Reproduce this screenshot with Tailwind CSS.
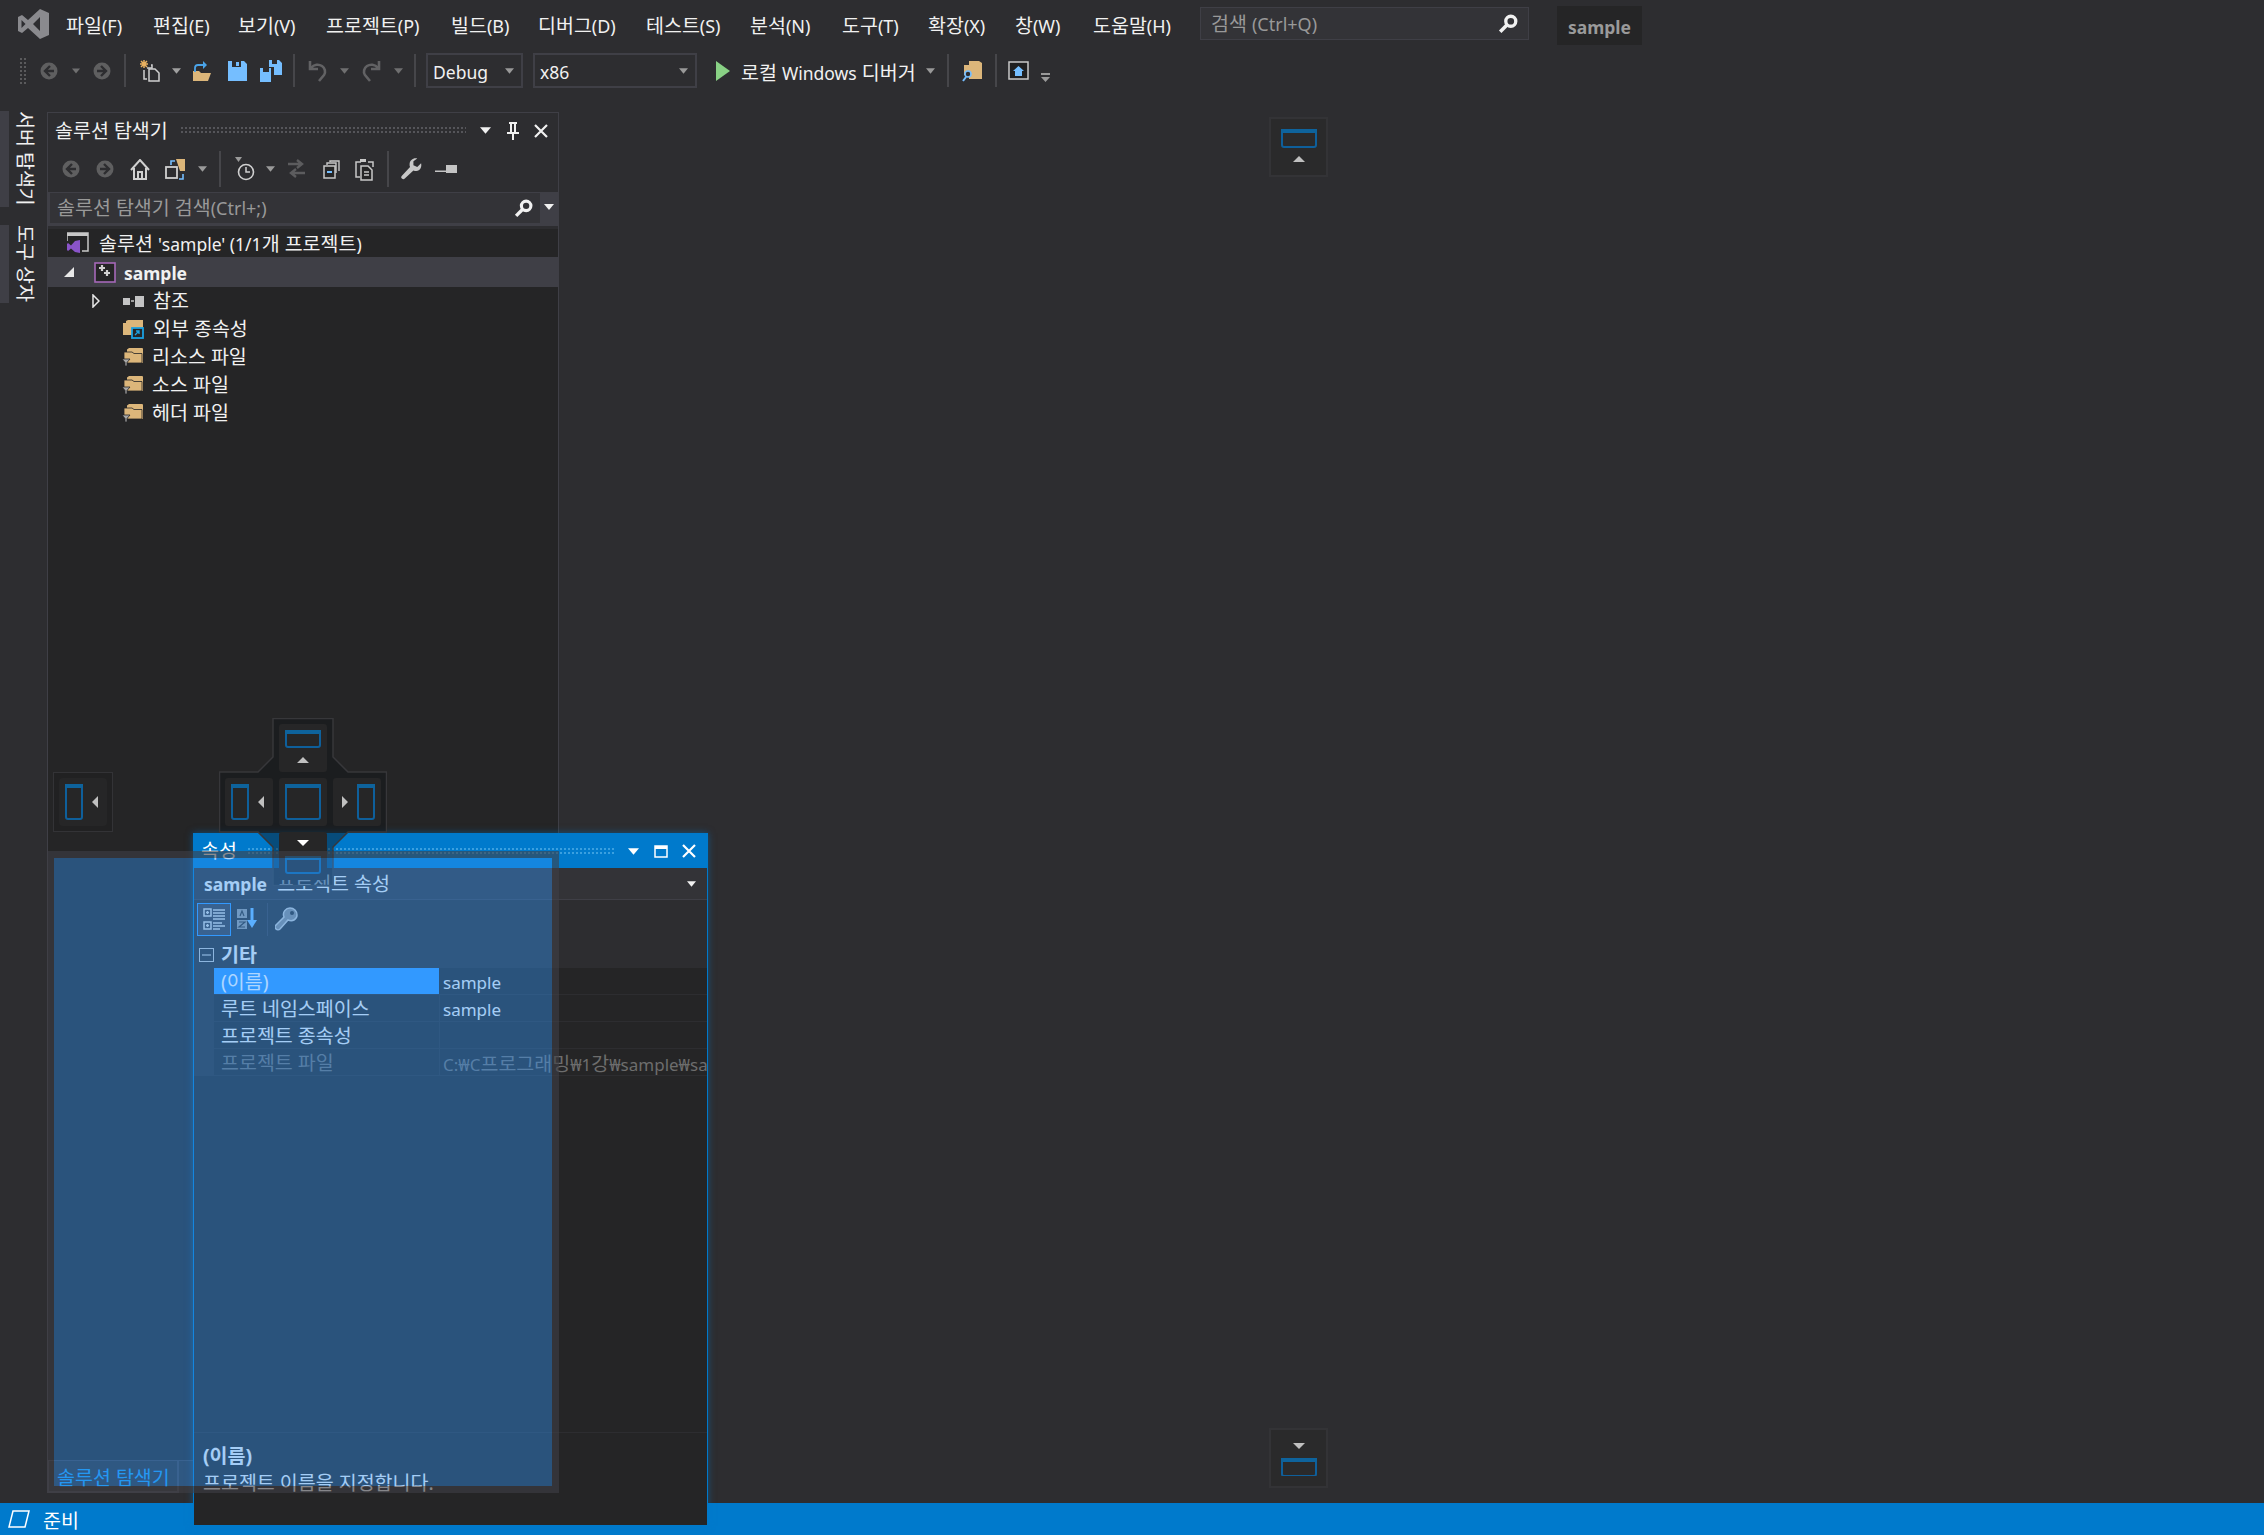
<!doctype html>
<html lang="ko">
<head>
<meta charset="utf-8">
<script src="https://cdn.jsdelivr.net/npm/@tailwindcss/browser@4"></script>
</head>
<body class="bg-[#2d2d30]">
<svg class="hidden">
<defs>
<symbol id="down" viewBox="0 0 10 6"><path d="M0 0h10L5 6z" fill="currentColor"/></symbol>
<symbol id="nav" viewBox="0 0 18 18"><circle cx="9" cy="9" r="8.5" fill="#5f5f60"/><path d="M10 4 5 9l5 5M5 9h9" stroke="#2d2d30" stroke-width="2.4" fill="none"/></symbol>
<symbol id="navr" viewBox="0 0 18 18"><circle cx="9" cy="9" r="8.5" fill="#5f5f60"/><path d="M8 4l5 5-5 5M13 9H4" stroke="#2d2d30" stroke-width="2.4" fill="none"/></symbol>
<symbol id="mag" viewBox="0 0 18 18"><circle cx="11.5" cy="6.5" r="4.5" fill="none" stroke="#f1f1f1" stroke-width="3"/><path d="M8 10 2 16" stroke="#f1f1f1" stroke-width="3.2"/></symbol>
<symbol id="wrench" viewBox="0 0 24 24"><path d="M22 6l-4 4-4-2V4l4-3c-4-1-8 2-8 6 0 1 0 2 .5 3L2 19c-1 1-1 2 0 3s2 1 3 0l9-8.500c1 .5 2 .5 3 .5 4 0 6-4 5-8z" fill="currentColor"/></symbol>
<symbol id="filter" viewBox="0 0 22 20"><path d="M5 5V2.500L7 1h13a1 1 0 0 1 1 1v14H5z" fill="#dcb67a"/><path d="M2 5h8l2 1.500h8V16H5v-3H2z" fill="#dcb67a" stroke="#252526" stroke-width=".8"/><path d="M0 12h8L5 15.500V19H3v-3.500z" fill="#a8a8a8" stroke="#252526" stroke-width=".8"/></symbol>
</defs>
</svg>
<div class="relative w-[2264px] h-[1535px] overflow-hidden flex flex-col text-[#f1f1f1] text-[19.500px] font-['Noto_Sans','Noto_Sans_CJK_KR',sans-serif]">

  <!-- menu bar -->
  <div class="h-[50px] flex items-start shrink-0">
    <div class="w-[66px] pl-[18px] pt-[9px] shrink-0">
      <svg width="31" height="30" viewBox="0 0 31 30"><path d="M22 0 31 4v22l-9 4-12-11-6 5-4-2V8l4-2 6 5zM22 8l-7 7 7 7zM3.500 11v8l4-4z" fill="#8a8a8e" fill-rule="evenodd"/></svg>
    </div>
    <div class="flex items-center h-[50px] pt-[1px] shrink-0 leading-none whitespace-nowrap [&>span>i]:not-italic [&>span>i]:text-[18px]">
      <span class="w-[87px]">파일<i>(F)</i></span>
      <span class="w-[85px]">편집<i>(E)</i></span>
      <span class="w-[88px]">보기<i>(V)</i></span>
      <span class="w-[125px]">프로젝트<i>(P)</i></span>
      <span class="w-[87px]">빌드<i>(B)</i></span>
      <span class="w-[108px]">디버그<i>(D)</i></span>
      <span class="w-[104px]">테스트<i>(S)</i></span>
      <span class="w-[92px]">분석<i>(N)</i></span>
      <span class="w-[86px]">도구<i>(T)</i></span>
      <span class="w-[87px]">확장<i>(X)</i></span>
      <span class="w-[78px]">창<i>(W)</i></span>
      <span class="w-[107px]">도움말<i>(H)</i></span>
    </div>
    <div class="mt-[7px] w-[329px] h-[33px] bg-[#333337] border border-[#3f3f46] flex items-center pl-[10px] pr-[10px] justify-between text-[#999999] shrink-0">
      <span class="whitespace-nowrap">검색 <span class="text-[18px]">(Ctrl+Q)</span></span>
      <svg width="20" height="20"><use href="#mag"/></svg>
    </div>
    <div class="ml-[28px] mt-[6px] pt-[3px] w-[85px] h-[39px] bg-[#252526] flex items-center justify-center font-bold text-[17.500px] text-[#9a9a9a] shrink-0">sample</div>
  </div>

  <!-- toolbar -->
  <div class="h-[41px] flex items-center pl-[19px] shrink-0 text-[#6f6f70]">
    <div class="w-[8px] h-[28px] bg-[radial-gradient(#5a5a5c_1px,transparent_1px)] bg-[length:4px_4px]"></div>
    <svg class="ml-[13px]" width="18" height="18"><use href="#nav"/></svg>
    <svg class="ml-[14px]" width="8" height="6"><use href="#down"/></svg>
    <svg class="ml-[13px]" width="18" height="18"><use href="#navr"/></svg>
    <div class="ml-[13px] w-[2px] h-[33px] bg-[#46464a]"></div>
    <svg class="ml-[13px]" width="21" height="22" viewBox="0 0 21 22"><path d="M10 9h6l4 4v8H10z" fill="#2d2d30" stroke="#d0d0d0" stroke-width="1.500"/><path d="M8 8h5V5h-1M5 10v9h3" fill="none" stroke="#d0d0d0" stroke-width="1.500"/><path d="M5 0v8M1 4h8M2 1l6 6M8 1 2 7" stroke="#e8b060" stroke-width="1.500"/></svg>
    <svg class="ml-[12px] text-[#a0a0a0]" width="9" height="6"><use href="#down"/></svg>
    <svg class="ml-[11px]" width="21" height="22" viewBox="0 0 21 22"><path d="M1 21V11h6l2 2h10l-3 8z" fill="#dcb67a"/><path d="M3 12V8c0-2 1-3 3-3h6" fill="none" stroke="#4aa3e8" stroke-width="1.800"/><path d="M11 1l4 4-4 4z" fill="#4aa3e8"/></svg>
    <svg class="ml-[15px]" width="19" height="20" viewBox="0 0 19 20"><path d="M0 0h4v6h9V0h3l3 3v17H0z" fill="#75beff"/><rect x="8" y="1" width="3" height="4" fill="#75beff"/></svg>
    <svg class="ml-[13px]" width="22" height="22" viewBox="0 0 22 22"><path d="M0 8h3v4h6V8h2v14H0z" fill="#75beff"/><path d="M9 0h3v4h5V0h2l3 3v12h-8V7H9z" fill="#75beff"/></svg>
    <div class="ml-[11px] w-[2px] h-[33px] bg-[#46464a]"></div>
    <svg class="ml-[13px]" width="19" height="22" viewBox="0 0 19 22"><path d="M2 1v8h8M3 8c3-4 8-4 11-2s4 6 2 9l-5 6" fill="none" stroke="#626264" stroke-width="2.600"/></svg>
    <svg class="ml-[13px]" width="9" height="6"><use href="#down"/></svg>
    <svg class="ml-[13px]" width="19" height="22" viewBox="0 0 19 22"><path d="M17 1v8H9M16 8c-3-4-8-4-11-2s-4 6-2 9l5 6" fill="none" stroke="#626264" stroke-width="2.600"/></svg>
    <svg class="ml-[13px]" width="9" height="6"><use href="#down"/></svg>
    <div class="ml-[11px] w-[2px] h-[33px] bg-[#46464a]"></div>
    <div class="ml-[10px] w-[97px] h-[35px] border-2 border-[#3f3f46] flex items-center justify-between pl-[5px] pr-[7px] text-[#f1f1f1] text-[17.500px]">
      <span class="pt-[4px]">Debug</span><svg class="text-[#999]" width="9" height="6"><use href="#down"/></svg>
    </div>
    <div class="ml-[10px] w-[164px] h-[35px] border-2 border-[#3f3f46] flex items-center justify-between pl-[5px] pr-[7px] text-[#f1f1f1] text-[17.500px]">
      <span class="pt-[4px]">x86</span><svg class="text-[#999]" width="9" height="6"><use href="#down"/></svg>
    </div>
    <svg class="ml-[19px]" width="14" height="20" viewBox="0 0 14 20"><path d="M0 0 14 10 0 20z" fill="#89d185"/></svg>
    <span class="ml-[11px] w-[175px] pt-[4px] text-[#f1f1f1] whitespace-nowrap">로컬 <span class="text-[17.500px]">Windows</span> 디버거</span>
    <svg class="ml-[10px] text-[#999]" width="9" height="6"><use href="#down"/></svg>
    <div class="ml-[12px] w-[2px] h-[33px] bg-[#46464a]"></div>
    <svg class="ml-[13px]" width="20" height="22" viewBox="0 0 20 22"><path d="M7 3V1h10l3 2v16H7z" fill="#dcb67a"/><path d="M2 5h9v10H2z" fill="#dcb67a"/><circle cx="6" cy="14" r="3" fill="#2d2d30" stroke="#75beff" stroke-width="1.600"/><path d="M4 17l-3 4" stroke="#75beff" stroke-width="2"/></svg>
    <div class="ml-[13px] w-[2px] h-[33px] bg-[#46464a]"></div>
    <svg class="ml-[11px]" width="21" height="19" viewBox="0 0 21 19"><rect x="1" y="1" width="19" height="17" fill="#1f1f20" stroke="#c8c8c8" stroke-width="1.500"/><path d="M10.500 5 5 10h2v5h7v-5h2z" fill="#75beff"/></svg>
    <svg class="ml-[12px] mt-[14px] text-[#999]" width="9" height="9" viewBox="0 0 9 9"><path d="M0 0h9v2H0zM0 4h9L4.500 9z" fill="currentColor"/></svg>
  </div>

  <!-- main -->
  <div class="flex-1 flex min-h-0">
    <div class="w-[47px] shrink-0 pt-[20px] flex flex-col gap-[18px]">
      <div class="flex h-[96px]"><div class="w-[9px] bg-[#3f3f46]"></div><span class="pl-[6px] [writing-mode:vertical-rl] [text-orientation:sideways] whitespace-nowrap leading-[20px]">서버 탐색기</span></div>
      <div class="flex h-[78px]"><div class="w-[9px] bg-[#3f3f46]"></div><span class="pl-[6px] [writing-mode:vertical-rl] [text-orientation:sideways] whitespace-nowrap leading-[20px]">도구 상자</span></div>
    </div>
    <div class="mt-[21px] mb-[10px] w-[512px] flex flex-col shrink-0">
      <div class="flex-1 flex flex-col border border-[#3f3f46] min-h-0">
        <div class="h-[35px] flex items-center pl-[7px] pr-[10px] shrink-0">
          <span class="w-[125px] shrink-0 whitespace-nowrap">솔루션 탐색기</span>
          <div class="w-[286px] h-[9px] bg-[radial-gradient(#55555a_1px,transparent_1px)] bg-[length:4px_4px]"></div>
          <svg class="ml-[14px]" width="11" height="7"><use href="#down"/></svg>
          <svg class="ml-[16px]" width="12" height="20" viewBox="0 0 12 20"><path d="M2 1h8v2H9v8h3v2H7v6H5v-6H0v-2h3V3H2z" fill="#f1f1f1"/><path d="M5 3h2v8H5z" fill="#2d2d30"/></svg>
          <svg class="ml-[15px]" width="14" height="14" viewBox="0 0 14 14"><path d="M1 1l12 12M13 1 1 13" stroke="#f1f1f1" stroke-width="2.200"/></svg>
        </div>
        <div class="h-[44px] flex items-center pl-[14px] pb-[2px] shrink-0 text-[#9a9a9a]">
          <svg width="18" height="18"><use href="#nav"/></svg>
          <svg class="ml-[16px]" width="18" height="18"><use href="#navr"/></svg>
          <svg class="ml-[16px]" width="20" height="21" viewBox="0 0 20 21"><path d="M1 11 10 1l9 10M4 9v11h12V9M8 20v-7h4v7" fill="none" stroke="#d0d0d0" stroke-width="2"/></svg>
          <svg class="ml-[15px]" width="22" height="22" viewBox="0 0 22 22"><rect x="1" y="9" width="11" height="11" fill="none" stroke="#d0d0d0" stroke-width="1.800"/><path d="M11 1h9v12h-5" fill="#dcb67a"/><path d="M6 7V3h4" stroke="#75beff" stroke-width="1.600" fill="none"/><path d="M14 21h4v-5" stroke="#75beff" stroke-width="1.600" fill="none"/></svg>
          <svg class="ml-[11px]" width="9" height="6"><use href="#down"/></svg>
          <div class="ml-[12px] w-[2px] h-[36px] bg-[#46464a]"></div>
          <svg class="ml-[14px]" width="20" height="24" viewBox="0 0 20 24"><path d="M0 0h7L3.500 5z" fill="#9a9a9a"/><circle cx="11" cy="15" r="7.500" fill="none" stroke="#d0d0d0" stroke-width="1.600"/><path d="M11 10v5h4" fill="none" stroke="#d0d0d0" stroke-width="1.500"/></svg>
          <svg class="ml-[11px]" width="9" height="6"><use href="#down"/></svg>
          <svg class="ml-[13px]" width="17" height="22" viewBox="0 0 17 22"><path d="M0 6h13M9 2l5 4-5 4M17 15H4M8 11l-5 4 5 4" fill="none" stroke="#5c5c5e" stroke-width="2.400"/></svg>
          <svg class="ml-[18px]" width="17" height="19" viewBox="0 0 17 19"><rect x="1" y="6" width="11" height="12" fill="#252526" stroke="#c8c8c8" stroke-width="1.500"/><path d="M4 5V3h9v10M7 2V1h9v10" fill="none" stroke="#c8c8c8" stroke-width="1.400"/><path d="M4 12h5" stroke="#75beff" stroke-width="2"/></svg>
          <svg class="ml-[14px]" width="21" height="23" viewBox="0 0 21 23"><path d="M7 4H2v15h4" fill="none" stroke="#c8c8c8" stroke-width="1.500"/><path d="M6 1h6v3H6z" fill="#c8c8c8"/><path d="M14 4h5v5" fill="none" stroke="#c8c8c8" stroke-width="1.500"/><path d="M7 8h7l4 4v10H7z" fill="#252526" stroke="#c8c8c8" stroke-width="1.500"/><path d="M10 14h5M10 17h5" stroke="#c8c8c8" stroke-width="1.400"/></svg>
          <div class="ml-[12px] w-[2px] h-[36px] bg-[#46464a]"></div>
          <svg class="ml-[11px] text-[#c8c8c8]" width="23" height="24"><use href="#wrench"/></svg>
          <svg class="ml-[12px]" width="22" height="8" viewBox="0 0 22 8"><path d="M0 5.500h11V7H0z M11 0h11v8H11z" fill="#c4c4c4"/></svg>
        </div>
        <div class="h-[34px] bg-[#3f3f46] flex pl-[2px] pt-[1px] shrink-0">
          <div class="w-[490px] h-[30px] bg-[#333337] flex items-center justify-between pl-[7px] pr-[7px] text-[#999999]">
            <span class="whitespace-nowrap">솔루션 탐색기 검색<span class="text-[18px]">(Ctrl+;)</span></span>
            <svg width="19" height="19"><use href="#mag"/></svg>
          </div>
          <svg class="ml-[4px] mt-[11px]" width="10" height="6"><use href="#down"/></svg>
        </div>
        <div class="flex-1 bg-[#252526] mt-[3px] text-[#f1f1f1]">
          <div class="h-[28px] flex items-center pl-[19px]">
            <svg width="22" height="22" viewBox="0 0 22 22"><path d="M0 1h21v18h-6M0 1v8" fill="none" stroke="#c8c8c8" stroke-width="1.500"/><path d="M0 1h21v3H0z" fill="#c8c8c8"/><path d="M8 9l5-1v13l-5-1-4-3.500L1 19l-1-1v-6l1-1 3 2.500z" fill="#8a54c9"/></svg>
            <span class="ml-[10px] pt-[2px] whitespace-nowrap">솔루션 <span class="text-[17.500px]">'sample' (1/1</span>개 프로젝트<span class="text-[17.500px]">)</span></span>
          </div>
          <div class="h-[30px] bg-[#3f3f46] flex items-center pl-[16px]">
            <svg width="10" height="10" viewBox="0 0 10 10"><path d="M10 0v10H0z" fill="#e8e8e8"/></svg>
            <svg class="ml-[20px]" width="22" height="21" viewBox="0 0 22 21"><rect x="1" y="1" width="20" height="19" fill="#252526" stroke="#a668b8" stroke-width="1.600"/><path d="M5 6h6M8 3v6M10 11h6M13 8v6" stroke="#d0d0d0" stroke-width="2.200"/></svg>
            <span class="ml-[8px] pt-[2px] font-bold text-[17.500px]">sample</span>
          </div>
          <div class="h-[28px] flex items-center pl-[44px]">
            <svg width="8" height="14" viewBox="0 0 8 14"><path d="M1 1l6 6-6 6z" fill="none" stroke="#e8e8e8" stroke-width="1.500"/></svg>
            <svg class="ml-[23px]" width="21" height="11" viewBox="0 0 21 11"><rect y="2" width="7" height="7" fill="#c4c4c4"/><rect x="12" width="9" height="11" fill="#c4c4c4"/><path d="M8 5h3" stroke="#c4c4c4" stroke-width="1.500"/></svg>
            <span class="ml-[9px] pb-[1px]">참조</span>
          </div>
          <div class="h-[28px] flex items-center pl-[75px]">
            <svg width="21" height="20" viewBox="0 0 21 20"><path d="M3 4V2l2-1h15v9H3z" fill="#dcb67a"/><path d="M0 4h8l2 2h10v10H0z" fill="#dcb67a"/><rect x="9" y="9" width="11" height="10" fill="#252526" stroke="#1ba1e2" stroke-width="1.800"/><path d="M12 16l4-4M13 12h3v3" stroke="#1ba1e2" stroke-width="1.300" fill="none"/></svg>
            <span class="ml-[9px] pb-[1px]">외부 종속성</span>
          </div>
          <div class="h-[28px] flex items-center pl-[74px]"><svg width="22" height="20"><use href="#filter"/></svg><span class="ml-[8px] pb-[1px]">리소스 파일</span></div>
          <div class="h-[28px] flex items-center pl-[74px]"><svg width="22" height="20"><use href="#filter"/></svg><span class="ml-[8px] pb-[1px]">소스 파일</span></div>
          <div class="h-[28px] flex items-center pl-[74px]"><svg width="22" height="20"><use href="#filter"/></svg><span class="ml-[8px] pb-[1px]">헤더 파일</span></div>
        </div>
      </div>
      <div class="h-[32px] w-[132px] border-2 border-t-0 border-[#3f3f46] text-[#1c97ea] pl-[8px] pt-[2px] shrink-0 leading-[29px] whitespace-nowrap overflow-hidden">솔루션 탐색기</div>
    </div>
  </div>

  <!-- status bar -->
  <div class="h-[32px] bg-[#007acc] flex items-center pl-[7px] text-white shrink-0">
    <svg width="23" height="18" viewBox="0 0 23 18"><path d="M6 1h16l-4 16H2z" fill="none" stroke="#fff" stroke-width="1.500"/></svg>
    <span class="ml-[13px] pt-[3px]">준비</span>
  </div>

  <!-- outer dock targets -->
  <div class="absolute left-[1269px] top-[117px] w-[59px] h-[60px] bg-[#2a2a2b] border-2 border-[#333336] flex flex-col items-center">
    <svg class="mt-[10px]" width="36" height="33" viewBox="0 0 36 33"><rect x="1" y="1" width="34" height="17" rx="2" fill="#2a2a2b" stroke="#0e5f9b" stroke-width="2"/><rect width="36" height="4" fill="#0e639c"/><path d="M18 27l6 6H12z" fill="#c0c0c0"/></svg>
  </div>
  <div class="absolute left-[1269px] top-[1428px] w-[59px] h-[60px] bg-[#2a2a2b] border-2 border-[#333336] flex flex-col items-center">
    <svg class="mt-[13px]" width="36" height="33" viewBox="0 0 36 33"><path d="M12 0h12l-6 6z" fill="#c0c0c0"/><rect x="1" y="16" width="34" height="17" rx="2" fill="#2a2a2b" stroke="#0e5f9b" stroke-width="2"/><rect y="15" width="36" height="4" fill="#0e639c"/></svg>
  </div>
  <div class="absolute left-[53px] top-[772px] w-[60px] h-[60px] bg-[#212122] border border-[#333336] p-[5px]">
    <div class="w-[48px] h-[48px] bg-[#262627] rounded-sm">
      <svg width="48" height="48" viewBox="0 0 48 48"><rect x="7" y="7" width="16" height="34" rx="2" fill="#262627" stroke="#0e5f9b" stroke-width="2"/><rect x="6" y="6" width="18" height="4" fill="#0e639c"/><path d="M39 18v12l-6-6z" fill="#c0c0c0"/></svg>
    </div>
  </div>

  <!-- floating properties window -->
  <div class="absolute left-[193px] top-[833px] w-[515px] h-[693px] border border-[#007acc] bg-[#252526] shadow-[0_0_7px_#007acc80] flex flex-col">
    <div class="h-[34px] bg-[#007acc] flex items-center pl-[7px] pr-[8px] text-white shrink-0">
      <span class="w-[46px] shrink-0">속성</span>
      <div class="w-[369px] h-[9px] bg-[radial-gradient(#3aa0e0_1px,transparent_1px)] bg-[length:4px_4px]"></div>
      <svg class="ml-[12px]" width="11" height="7"><use href="#down"/></svg>
      <svg class="ml-[15px]" width="14" height="13" viewBox="0 0 14 13"><path d="M1 1h12v11H1z" fill="none" stroke="#fff" stroke-width="1.500"/><path d="M1 1h12v3H1z" fill="#fff"/></svg>
      <svg class="ml-[14px]" width="14" height="14" viewBox="0 0 14 14"><path d="M1 1l12 12M13 1 1 13" stroke="#fff" stroke-width="2.200"/></svg>
    </div>
    <div class="h-[32px] bg-[#333337] border-b border-[#3f3f46] flex items-center justify-between pl-[10px] pr-[11px] shrink-0">
      <span class="whitespace-nowrap"><b class="text-[17.500px]">sample</b>&nbsp; 프로젝트 속성</span>
      <svg width="9" height="6"><use href="#down"/></svg>
    </div>
    <div class="h-[38px] bg-[#2d2d30] flex items-center pl-[3px] shrink-0">
      <div class="w-[34px] h-[33px] bg-[#3f3f46] border border-[#3399ff] flex items-center justify-center">
        <svg width="22" height="22" viewBox="0 0 22 22"><path d="M1 1h7v7H1zM1 14h7v7H1z" fill="none" stroke="#d8d8d8" stroke-width="1.500"/><path d="M3 4.500h3M4.500 3v3M3 17.500h3M4.500 16v3M10 2h12M10 5h12M10 8h12M10 11h12M10 15h9M10 18h12M10 21h7" stroke="#d8d8d8" stroke-width="1.300"/></svg>
      </div>
      <svg class="ml-[5px]" width="24" height="24" viewBox="0 0 24 24"><rect x="1" y="2" width="10" height="9" fill="#9a9a9a"/><rect x="1" y="13" width="10" height="9" fill="#9a9a9a"/><path d="M4 9l2-5 2 5M3 15h6l-6 5h6" stroke="#333" stroke-width="1.200" fill="none"/><path d="M16 1v16" stroke="#75beff" stroke-width="3"/><path d="M11 13l5 8 5-8z" fill="#75beff"/></svg>
      <div class="ml-[7px] w-px h-[33px] bg-[#3f3f46]"></div>
      <svg class="ml-[7px] text-[#c8c8c8]" width="24" height="24" viewBox="0 0 24 24"><path d="M22 8c0 4-4 7-9 5l-8 9c-1 1-3 1-4 0s-1-3 0-4l8-8c-2-5 2-9 6-9 4-0 7 3 7 7z" fill="#8a8a8c" stroke="currentColor" stroke-width="1.500"/><circle cx="17" cy="6" r="2" fill="#2d2d30"/></svg>
    </div>
    <div class="h-[30px] pt-[3px] bg-[#2d2d30] flex items-center pl-[5px] shrink-0">
      <svg width="15" height="14" viewBox="0 0 15 14"><rect x=".5" y=".5" width="14" height="13" fill="none" stroke="#c8c8c8"/><path d="M3 7h9" stroke="#c8c8c8" stroke-width="1.200"/></svg>
      <b class="ml-[7px]">기타</b>
    </div>
    <div class="h-[108px] flex flex-col shrink-0 whitespace-nowrap">
      <div class="h-[27px] flex bg-[#2d2d30]"><div class="w-[20px]"></div><div class="w-[225px] h-[26px] bg-[#3399ff] text-white pl-[7px] leading-[28px]">(이름)</div><div class="flex-1 h-[26px] bg-[#252526] pl-[4px] leading-[30px] text-[17px]">sample</div></div>
      <div class="h-[27px] flex bg-[#2d2d30]"><div class="w-[20px]"></div><div class="w-[225px] h-[26px] bg-[#252526] pl-[7px] leading-[28px]">루트 네임스페이스</div><div class="flex-1 ml-px h-[26px] bg-[#252526] pl-[3px] leading-[30px] text-[17px]">sample</div></div>
      <div class="h-[27px] flex bg-[#2d2d30]"><div class="w-[20px]"></div><div class="w-[225px] h-[26px] bg-[#252526] pl-[7px] leading-[28px]">프로젝트 종속성</div><div class="flex-1 ml-px h-[26px] bg-[#252526]"></div></div>
      <div class="h-[27px] flex bg-[#2d2d30] text-[#6d6d6d]"><div class="w-[20px]"></div><div class="w-[225px] h-[26px] bg-[#252526] pl-[7px] leading-[28px]">프로젝트 파일</div><div class="flex-1 min-w-0 ml-px h-[26px] bg-[#252526] pl-[3px] leading-[30px] overflow-hidden"><span class="text-[17px]">C:₩C</span>프로그래밍<span class="text-[17px]">₩1</span>강<span class="text-[17px]">₩sample₩sample.vcxproj</span></div></div>
    </div>
    <div class="flex-1 bg-[#252526]"></div>
    <div class="h-[93px] bg-[#252526] border-t border-[#2d2d30] pl-[9px] pt-[9px] shrink-0 leading-[27px]">
      <b class="block">(이름)</b>
      <span>프로젝트 이름을 지정합니다.</span>
    </div>
  </div>

  <!-- dock cross -->
  <svg class="absolute left-[219px] top-[718px]" width="168" height="168" viewBox="0 0 168 168">
    <path d="M54 .5h60V39l15 15h38.500v60H129l-15 15v38.500H54V129L39 114H.5V54H39l15-15z" fill="#0f141973" stroke="#37373a" stroke-width="1.500"/>
    <g fill="#262627">
      <rect x="60" y="6" width="48" height="48" rx="3"/><rect x="6" y="60" width="48" height="48" rx="3"/><rect x="60" y="60" width="48" height="48" rx="3"/><rect x="114" y="60" width="48" height="48" rx="3"/><rect x="60" y="114" width="48" height="48" rx="3"/>
    </g>
    <g fill="none" stroke="#0e5f9b" stroke-width="2">
      <rect x="67" y="13" width="34" height="16" rx="2"/><rect x="67" y="67" width="34" height="34" rx="2"/><rect x="13" y="67" width="16" height="34" rx="2"/><rect x="139" y="67" width="16" height="34" rx="2"/><rect x="67" y="139" width="34" height="16" rx="2"/>
    </g>
    <g fill="#0e639c">
      <rect x="66" y="12" width="36" height="4"/><rect x="66" y="66" width="36" height="4"/><rect x="12" y="66" width="18" height="4"/><rect x="138" y="66" width="18" height="4"/><rect x="66" y="138" width="36" height="4"/>
    </g>
    <g fill="#c0c0c0">
      <path d="M84 39l6 6H78zM45 78v12l-6-6zM123 78v12l6-6z"/>
    </g>
    <path d="M78 122h12l-6 6z" fill="#fff"/>
  </svg>

  <!-- drop preview overlay -->
  <div class="absolute left-[47px] top-[851px] w-[512px] h-[642px] border-[7px] border-[#3f3f46]/60 bg-clip-padding bg-[#3399ff]/40"></div>
</div>
</body>
</html>
